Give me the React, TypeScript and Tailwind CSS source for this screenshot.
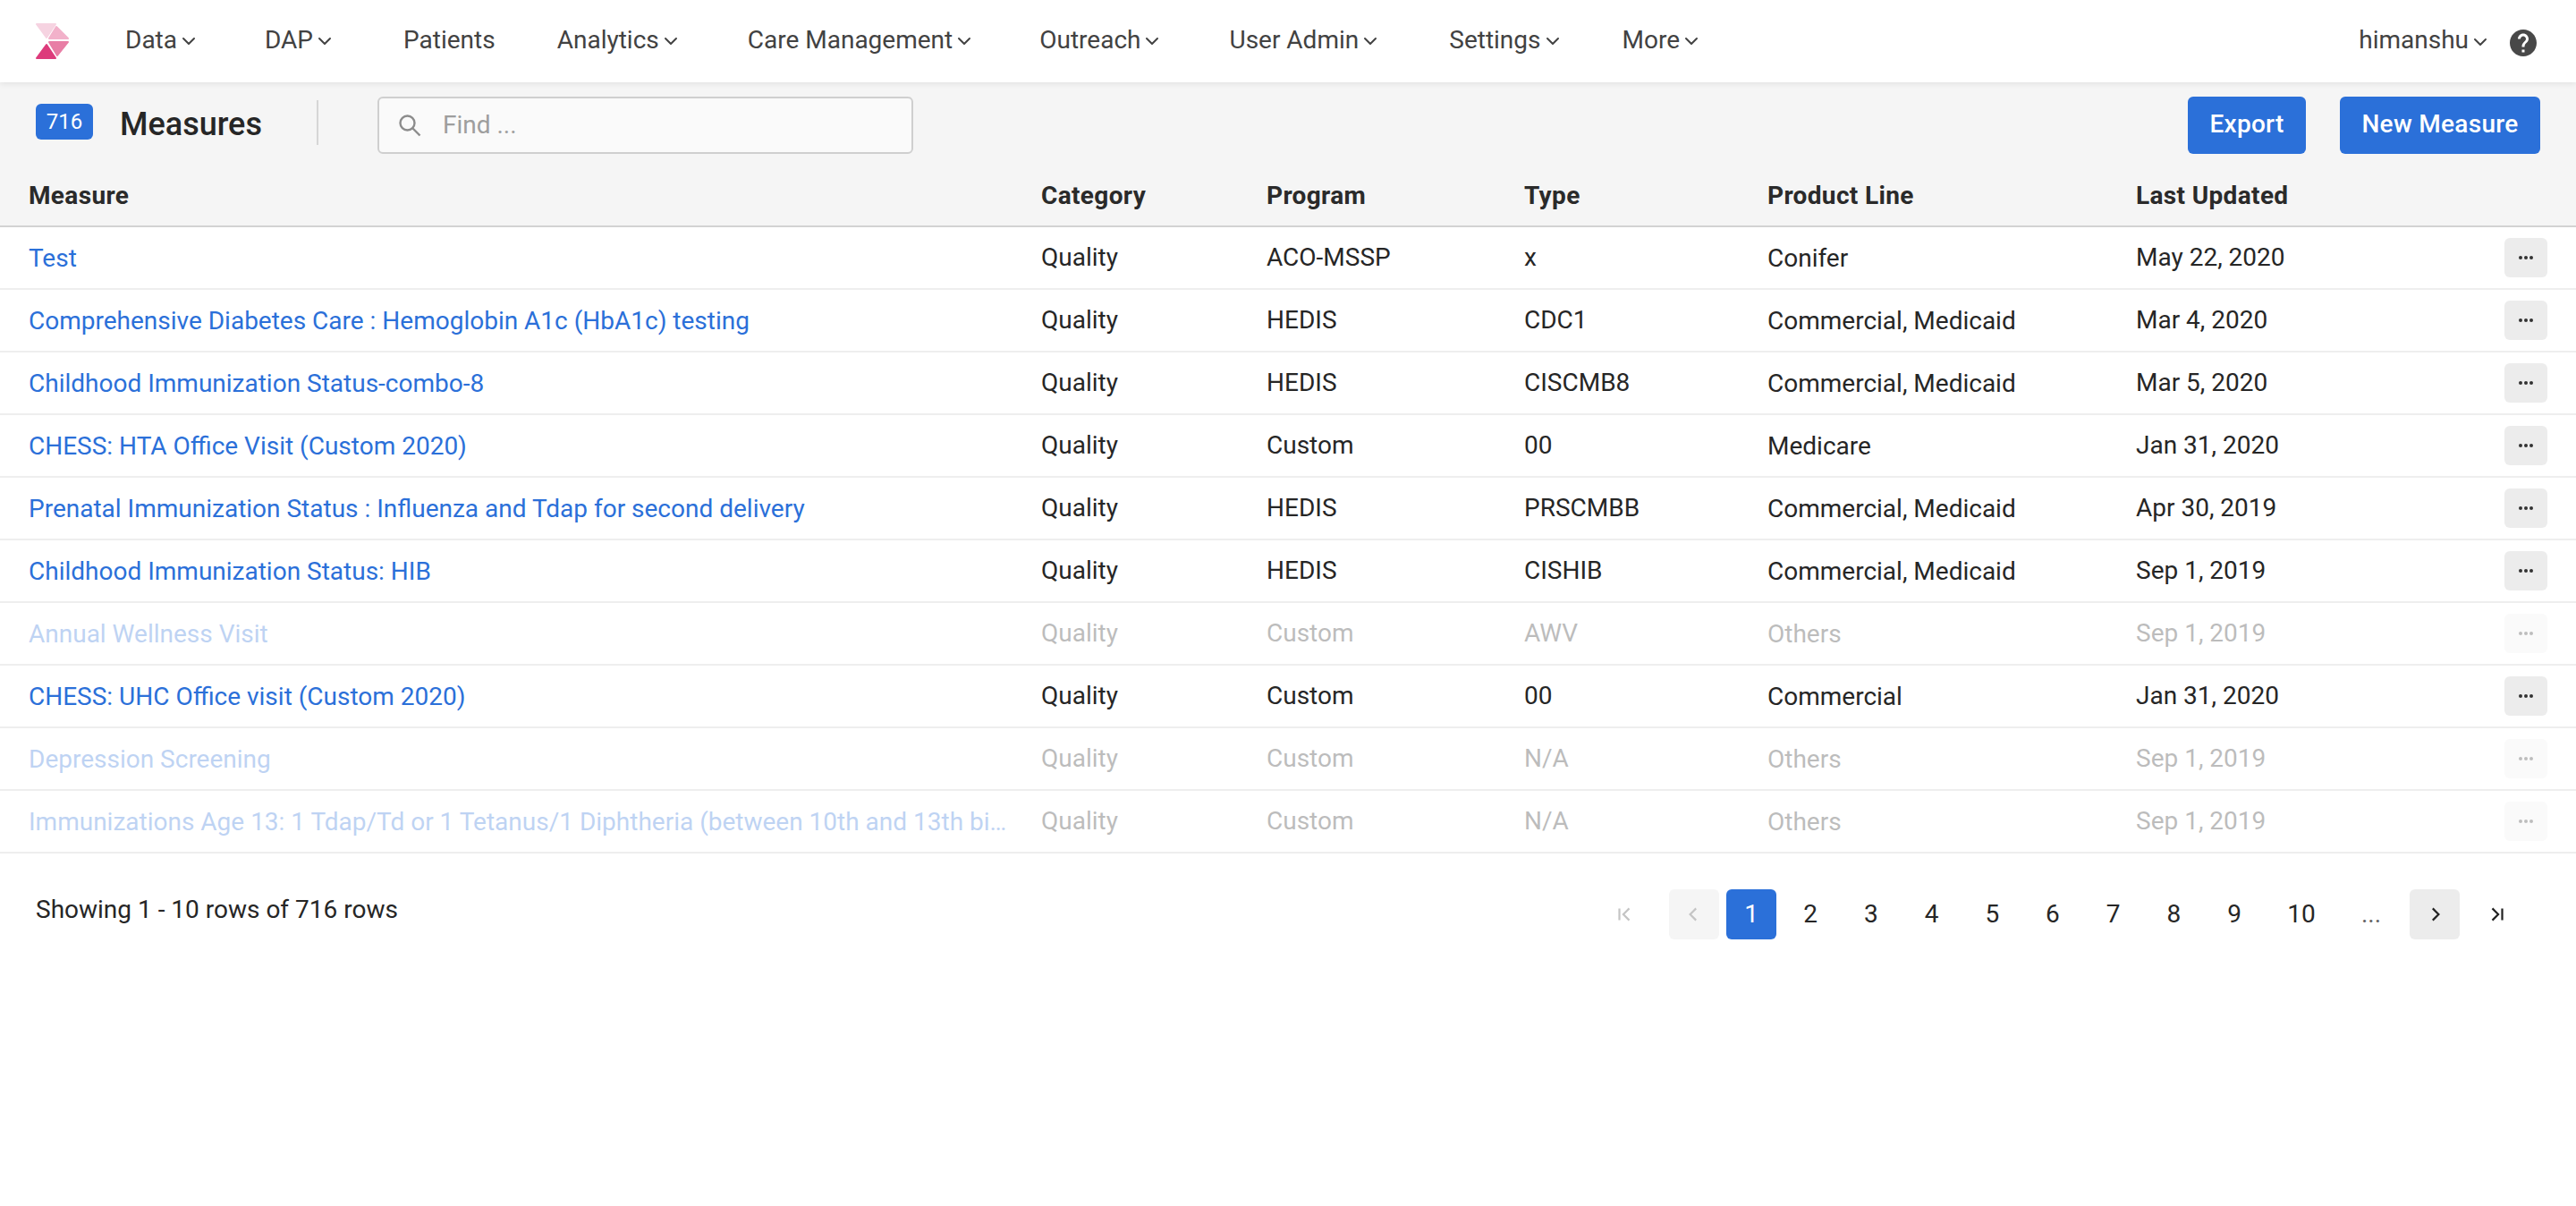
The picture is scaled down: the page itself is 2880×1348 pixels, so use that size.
import { ChevronDown } from 'lucide-react';
import { MdHelp } from 'react-icons/md';

const navItems = [
  { label: 'Data', caret: true, cls: '' },
  { label: 'DAP', caret: true, cls: 'ml-[78px]' },
  { label: 'Patients', caret: false, cls: 'ml-[81px]' },
  { label: 'Analytics', caret: true, cls: 'ml-[69px]' },
  { label: 'Care Management', caret: true, cls: 'ml-[79px]' },
  { label: 'Outreach', caret: true, cls: 'ml-[77px]' },
  { label: 'User Admin', caret: true, cls: 'ml-[79px]' },
  { label: 'Settings', caret: true, cls: 'ml-[81px]' },
  { label: 'More', caret: true, cls: 'ml-[71px]' },
];

const rows = [
  { name: 'Test', program: 'ACO-MSSP', type: 'x', line: 'Conifer', updated: 'May 22, 2020' },
  { name: 'Comprehensive Diabetes Care : Hemoglobin A1c (HbA1c) testing', program: 'HEDIS', type: 'CDC1', line: 'Commercial, Medicaid', updated: 'Mar 4, 2020' },
  { name: 'Childhood Immunization Status-combo-8', program: 'HEDIS', type: 'CISCMB8', line: 'Commercial, Medicaid', updated: 'Mar 5, 2020' },
  { name: 'CHESS: HTA Office Visit (Custom 2020)', program: 'Custom', type: '00', line: 'Medicare', updated: 'Jan 31, 2020' },
  { name: 'Prenatal Immunization Status : Influenza and Tdap for second delivery', program: 'HEDIS', type: 'PRSCMBB', line: 'Commercial, Medicaid', updated: 'Apr 30, 2019' },
  { name: 'Childhood Immunization Status: HIB', program: 'HEDIS', type: 'CISHIB', line: 'Commercial, Medicaid', updated: 'Sep 1, 2019' },
  { name: 'Annual Wellness Visit', program: 'Custom', type: 'AWV', line: 'Others', updated: 'Sep 1, 2019', off: true },
  { name: 'CHESS: UHC Office visit (Custom 2020)', program: 'Custom', type: '00', line: 'Commercial', updated: 'Jan 31, 2020' },
  { name: 'Depression Screening', program: 'Custom', type: 'N/A', line: 'Others', updated: 'Sep 1, 2019', off: true },
  { name: 'Immunizations Age 13: 1 Tdap/Td or 1 Tetanus/1 Diphtheria (between 10th and 13th birthdays)', program: 'Custom', type: 'N/A', line: 'Others', updated: 'Sep 1, 2019', off: true },
];

const gridCols = 'grid grid-cols-[1132px_252px_288px_272px_412px_1fr] items-center pl-[32px] pr-[32px]';

function Logo() {
  return (
    <svg width="40" height="42" viewBox="40 25 40 42" strokeLinejoin="round" strokeWidth="2">
      <polygon points="41,27 62,27 52,42" fill="#f6d3e1" stroke="#f6d3e1" />
      <polygon points="63,30 76,43 55,43" fill="#f2b1ca" stroke="#f2b1ca" />
      <polygon points="55,47 76,47 64,62" fill="#e87ea5" stroke="#e87ea5" />
      <polygon points="52,50 62,65 41,65" fill="#dd3b7b" stroke="#dd3b7b" />
    </svg>
  );
}

function Caret() {
  return <ChevronDown size={24} strokeWidth={2} className="-mr-[5px] ml-[1px] mt-[2px]" />;
}

function Dots({ faded }: { faded?: boolean }) {
  return (
    <button className={`flex h-[44px] w-[48px] items-center justify-center rounded-[6px] ${faded ? 'bg-[#fafafa]' : 'bg-[#ececec]'}`}>
      <svg width="16" height="4" viewBox="0 0 16 4" className={faded ? 'text-[#bdbdbd]' : 'text-[#333333]'} fill="currentColor">
        <circle cx="2" cy="2" r="2" />
        <circle cx="8" cy="2" r="2" />
        <circle cx="14" cy="2" r="2" />
      </svg>
    </button>
  );
}

function PageArrow({ d, box, faded }: { d: string; box?: string; faded?: boolean }) {
  return (
    <div className={`flex h-[56px] w-[56px] items-center justify-center rounded-[6px] ${box ?? ''}`}>
      <svg width="22" height="22" viewBox="0 0 20 20" fill="none" stroke={faded ? '#c4c4c4' : '#212121'} strokeWidth="2">
        <path d={d} />
      </svg>
    </div>
  );
}

export default function App() {
  return (
    <div className="min-h-[1348px] bg-white font-['Roboto',sans-serif] text-[28px] leading-[40px] text-[#262626]">
      <nav className="relative z-10 flex h-[92px] items-center bg-white pl-[40px] pr-[41px] text-[#424242] shadow-[0_2px_6px_rgba(0,0,0,0.08)]">
        <Logo />
        <div className="ml-[60px] flex items-center pb-[2px]">
          {navItems.map((item) => (
            <div key={item.label} className={`flex items-center ${item.cls}`}>
              <span>{item.label}</span>
              {item.caret && <Caret />}
            </div>
          ))}
        </div>
        <div className="ml-auto flex items-center">
          <span className="pb-[2px]">himanshu</span>
          <Caret />
          <MdHelp size={36} className="ml-[23px] mt-[4px] text-[#484848]" />
        </div>
      </nav>

      <div className="bg-[#f5f5f5]">
        <div className="flex h-[80px] items-center pl-[40px] pr-[40px] pt-[16px]">
          <span className="mb-[8px] flex h-[40px] w-[64px] items-center justify-center rounded-[6px] bg-[#2b70d9] text-[24px] text-white">716</span>
          <h1 className="mb-[3px] ml-[30px] text-[36px] font-medium text-[#262626]">Measures</h1>
          <div className="mb-[6px] ml-[61px] h-[50px] w-[2px] bg-[#d6d6d6]" />
          <label className="ml-[66px] flex h-[64px] w-[599px] items-center rounded-[6px] border-2 border-[#cfcfcf] bg-[#fafafa] pl-[21px]">
            <svg width="26" height="26" viewBox="0 0 26 26" fill="none" stroke="#8c8c8c" strokeWidth="2.4">
              <circle cx="10.5" cy="10.5" r="8" />
              <path d="M16.5 16.5l8 8" />
            </svg>
            <span className="ml-[24px] text-[#9e9e9e]">Find ...</span>
          </label>
          <button className="ml-auto flex h-[64px] w-[132px] items-center justify-center rounded-[6px] bg-[#2b70d9] pb-[2px] font-medium tracking-[0.3px] text-white">Export</button>
          <button className="ml-[38px] flex h-[64px] w-[224px] items-center justify-center rounded-[6px] bg-[#2b70d9] pb-[2px] font-medium tracking-[0.3px] text-white">New Measure</button>
        </div>
        <div className={`${gridCols} h-[82px] border-b-2 border-[#d2d2d2] pt-[14px] font-bold tracking-[0.35px] text-[#2a2a2a]`}>
          <div>Measure</div>
          <div>Category</div>
          <div>Program</div>
          <div>Type</div>
          <div>Product Line</div>
          <div>Last Updated</div>
        </div>
      </div>

      <div>
        {rows.map((row) => (
          <div key={row.name} className={`${gridCols} h-[70px] border-b-2 border-[#eeeeee]`}>
            <div className={`truncate pr-[38px] pt-[2px] text-[#2b70d9] ${row.off ? 'opacity-30' : ''}`}>{row.name}</div>
            <div className={`pb-[1px] ${row.off ? 'opacity-30' : ''}`}>Quality</div>
            <div className={`pb-[1px] ${row.off ? 'opacity-30' : ''}`}>{row.program}</div>
            <div className={`pb-[1px] ${row.off ? 'opacity-30' : ''}`}>{row.type}</div>
            <div className={`pt-[2px] ${row.off ? 'opacity-30' : ''}`}>{row.line}</div>
            <div className="flex items-center justify-between">
              <span className={`pb-[1px] ${row.off ? 'opacity-30' : ''}`}>{row.updated}</span>
              <Dots faded={row.off} />
            </div>
          </div>
        ))}
      </div>

      <div className="flex items-start justify-between pl-[40px] pr-[60px] pt-[40px]">
        <div className="pt-[3px]">Showing 1 - 10 rows of 716 rows</div>
        <div className="flex items-center">
          <PageArrow d="M5 4v12M15 4l-6 6 6 6" faded />
          <PageArrow d="M12 4l-6 6 6 6" faded box="ml-[22px] bg-[#f5f5f5]" />
          <div className="ml-[8px] flex h-[56px] w-[56px] items-center justify-center rounded-[6px] bg-[#2b70d9] text-white">1</div>
          <div className="ml-[10px] flex items-center gap-[11.7px]">
            {['2', '3', '4', '5', '6', '7', '8', '9'].map((n) => (
              <div key={n} className="flex h-[56px] w-[56px] items-center justify-center">{n}</div>
            ))}
          </div>
          <div className="ml-[12px] flex h-[56px] w-[70px] items-center justify-center">10</div>
          <div className="ml-[15px] flex h-[56px] w-[56px] items-center justify-center text-[#616161]">...</div>
          <PageArrow d="M8 4l6 6-6 6" box="ml-[15px] bg-[#ececec]" />
          <PageArrow d="M5 4l6 6-6 6M15 4v12" box="ml-[14px]" />
        </div>
      </div>
    </div>
  );
}
